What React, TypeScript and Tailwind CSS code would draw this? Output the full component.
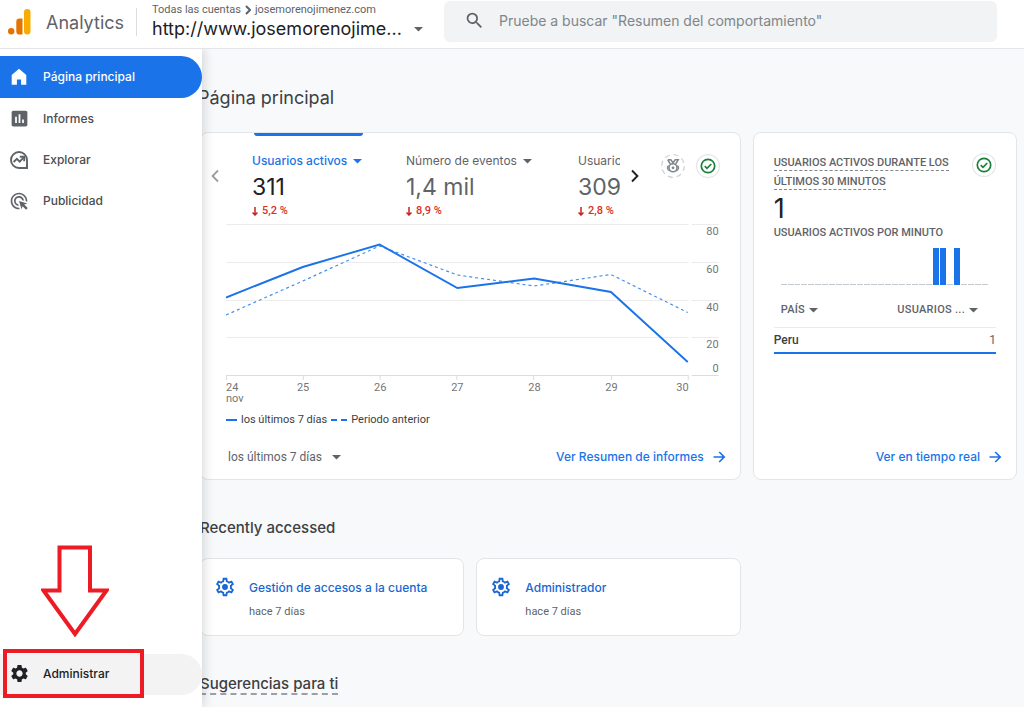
import { FormEvent } from "react";
import { MdAdsClick, MdInsertChart, MdSearch, MdSettings } from "react-icons/md";

const days = ["24", "25", "26", "27", "28", "29", "30"];

const metrics = [
  { label: "Usuarios activos", value: "311", change: "5,2 %", active: true },
  { label: "Número de eventos", value: "1,4 mil", change: "8,9 %", active: false },
  { label: "Usuarios nuevos", value: "309", change: "2,8 %", active: false },
];

const recent = [
  { title: "Gestión de accesos a la cuenta", when: "hace 7 días" },
  { title: "Administrador", when: "hace 7 días" },
];

function Logo() {
  return (
    <svg width="24" height="26" viewBox="0 0 24 26" aria-hidden>
      <rect x="16" y="0" width="6.5" height="25.5" rx="3.2" fill="#f9ab00" />
      <path d="M8.3 12.6a3.1 3.1 0 0 1 3.1-3.1h3.1v16h-3.1a3.1 3.1 0 0 1-3.1-3.1z" fill="#e37400" />
      <circle cx="3.2" cy="22.3" r="3.2" fill="#e37400" />
    </svg>
  );
}

function HomeIcon() {
  return (
    <svg width="18" height="18" viewBox="0 0 18 18" fill="currentColor" aria-hidden>
      <path d="M9 .8 16.3 7v9.8h-5.2v-5.2H6.9v5.2H1.7V7z" />
    </svg>
  );
}

function ExploreIcon() {
  return (
    <svg width="20" height="20" viewBox="0 0 20 20" fill="none" stroke="currentColor" strokeWidth="1.9" aria-hidden>
      <path d="M10 18a8 8 0 1 1 8-8v8z" />
      <path d="m4.6 12 3.3-3.2 2.8 2.8 3.8-4" />
      <path d="M10.8 6.8h4.4v4.4" />
      <path d="M18.6 13v5.6H13c3 0 5-2.6 5.6-5.6z" fill="currentColor" stroke="none" />
    </svg>
  );
}

function CheckBadge() {
  return (
    <svg width="24" height="24" viewBox="0 0 24 24" fill="none" aria-hidden>
      <circle cx="12" cy="12" r="11.4" fill="#fff" stroke="#e3e5e8" strokeWidth="1.2" />
      <circle cx="12" cy="12" r="6.7" stroke="#188038" strokeWidth="1.7" />
      <path d="m8.7 12.2 2.3 2.2 4.3-4.4" stroke="#188038" strokeWidth="1.6" />
    </svg>
  );
}

function MedalBadge() {
  return (
    <svg width="24" height="24" viewBox="0 0 24 24" fill="none" stroke="#80868b" aria-hidden>
      <circle cx="12" cy="12" r="11.3" stroke="#ced1d5" strokeWidth="1.2" strokeDasharray="5 3.9" />
      <path d="M6.8 5.8h3l2.2 3 2.2-3h3l-2.5 4.2M6.8 5.800 9.3 10" strokeWidth="1.5" />
      <circle cx="12" cy="13.8" r="4" strokeWidth="1.6" />
      <path d="M7.6 11.500c-1.800 1.400-1.600 4.200 1 5.400M16.400 11.500c1.800 1.400 1.600 4.200-1 5.400" strokeWidth="1.3" />
      <circle cx="12" cy="13.8" r="1.4" fill="#80868b" stroke="none" />
    </svg>
  );
}

function GearIcon() {
  return (
    <svg width="22" height="22" viewBox="0 0 24 24" fill="#1967d2" aria-hidden>
      <path
        fillRule="evenodd"
        d="M19.43 12.98c.04-.32.07-.64.07-.98s-.03-.66-.07-.98l2.11-1.65c.19-.15.24-.42.12-.64l-2-3.46c-.12-.22-.39-.3-.61-.22l-2.49 1c-.52-.4-1.08-.73-1.69-.98l-.38-2.65C14.46 2.18 14.25 2 14 2h-4c-.25 0-.46.18-.49.42l-.38 2.65c-.61.25-1.17.59-1.69.98l-2.49-1c-.23-.09-.49 0-.61.22l-2 3.46c-.13.22-.07.49.12.64l2.11 1.65c-.04.32-.07.65-.07.98s.03.66.07.98l-2.11 1.65c-.19.15-.24.42-.12.64l2 3.46c.12.22.39.3.61.22l2.49-1c.52.4 1.08.73 1.69.98l.38 2.65c.03.24.24.42.49.42h4c.25 0 .46-.18.49-.42l.38-2.65c.61-.25 1.17-.59 1.69-.98l2.49 1c.23.09.49 0 .61-.22l2-3.46c.12-.22.07-.49-.12-.64zm-1.98-1.71c.04.31.05.52.05.73s-.02.43-.05.73l-.14 1.13.89.7 1.08.84-.7 1.21-1.27-.51-1.04-.42-.9.68c-.43.32-.84.56-1.25.73l-1.06.43-.16 1.13-.2 1.35h-1.4l-.19-1.35-.16-1.13-1.06-.43c-.43-.18-.83-.41-1.23-.71l-.91-.7-1.06.43-1.27.51-.7-1.21 1.08-.84.89-.7-.14-1.13c-.03-.31-.05-.54-.05-.74s.02-.43.05-.73l.14-1.13-.89-.7-1.08-.84.7-1.21 1.27.51 1.04.42.9-.68c.43-.32.84-.56 1.25-.73l1.06-.43.16-1.13.2-1.35h1.39l.19 1.35.16 1.13 1.06.43c.43.18.83.41 1.23.71l.91.7 1.06-.43 1.27-.51.7 1.21-1.07.85-.89.7z"
      />
      <circle cx="12" cy="12" r="3.2" />
    </svg>
  );
}

function Chevron({ dir }: { dir: "left" | "right" }) {
  return (
    <svg width="8" height="14" viewBox="0 0 8 14" fill="none" stroke="currentColor" strokeWidth="1.9" aria-hidden>
      <path d={dir === "left" ? "M7 1.500 1.600 7 7 12.500" : "m1 1.500 5.400 5.500L1 12.500"} />
    </svg>
  );
}

function Caret() {
  return (
    <svg width="9" height="5" viewBox="0 0 9 5" fill="currentColor" className="shrink-0" aria-hidden>
      <path d="M0 0h9L4.500 4.600z" />
    </svg>
  );
}

function Header() {
  return (
    <header className="relative z-20 flex h-[49px] shrink-0 items-start border-b border-[#e3e5e8] bg-white">
      <a href="#inicio" className="flex h-11 w-[136px] shrink-0 items-center gap-3.5 pl-2">
        <Logo />
        <span className="text-[18px] text-[#5f6368]">Analytics</span>
      </a>
      <div className="mt-2 h-7 w-px shrink-0 bg-[#dadce0]" />
      <div className="w-[307px] shrink-0 pl-[15px] pt-[2px]">
        <div className="flex items-center gap-1 font-['Roboto',sans-serif] text-[11px] leading-4 text-[#5f6368]">
          <span>Todas las cuentas</span>
          <svg width="6" height="10" viewBox="0 0 6 10" fill="none" stroke="currentColor" strokeWidth="2" aria-hidden>
            <path d="m1 1 4 4-4 4" />
          </svg>
          <span>josemorenojimenez.com</span>
        </div>
        <button type="button" className="flex items-center gap-3 text-[18px] leading-[22px] text-[#202124]">
          <span>http://www.josemorenojime...</span>
          <span className="text-[#5f6368]"><Caret /></span>
        </button>
      </div>
      <form
        role="search"
        onSubmit={(e: FormEvent) => e.preventDefault()}
        className="mr-[27px] mt-px flex h-[41px] min-w-0 flex-1 items-center rounded-md bg-[#f1f3f4] pb-0.5 pl-5"
      >
        <MdSearch size={21} className="shrink-0 text-[#5f6368]" />
        <input
          type="search"
          aria-label="Buscar"
          placeholder={'Pruebe a buscar "Resumen del comportamiento"'}
          className="ml-3.5 min-w-0 flex-1 bg-transparent text-[14px] text-[#202124] outline-none placeholder:text-[#80868b]"
        />
      </form>
    </header>
  );
}

function Sidebar() {
  const items = [
    { label: "Página principal", icon: <HomeIcon />, active: true },
    { label: "Informes", icon: <MdInsertChart size={21} />, active: false },
    { label: "Explorar", icon: <ExploreIcon />, active: false },
    { label: "Publicidad", icon: <MdAdsClick size={20} />, active: false },
  ];
  return (
    <aside className="relative z-10 flex w-[202px] shrink-0 flex-col bg-white pt-[7px] shadow-[2px_0_10px_rgba(60,64,67,0.2)]">
      <nav className="flex flex-col">
        {items.map((item) => (
          <a
            key={item.label}
            href="#"
            aria-current={item.active ? "page" : undefined}
            className={
              item.active
                ? "flex h-[42px] items-center rounded-r-full bg-[#1a73e8] text-[12px] font-medium text-white"
                : "flex h-[41px] items-center rounded-r-full text-[12px] font-medium text-[#4a4d51]"
            }
          >
            <span className={item.active ? "flex w-[38px] justify-center" : "flex w-[38px] justify-center text-[#5f6368]"}>
              {item.icon}
            </span>
            <span className="pl-[5px]">{item.label}</span>
          </a>
        ))}
      </nav>
      <div className="mt-auto flex flex-col">
        <svg width="68" height="92" viewBox="0 0 68 92" fill="none" stroke="#ed1c24" strokeWidth="4" className="mb-[17px] ml-[41px]" aria-hidden>
          <path d="M18.5 2.500h30.500v43h16.500L34 89 2.500 45.500h16z" />
        </svg>
        <div className="relative mb-3 flex">
          <a href="#administrar" className="flex h-[41px] flex-1 items-center rounded-r-full bg-[#f3f3f3] pb-0.5 text-[12px] font-medium text-[#202124]">
            <span className="flex w-[38px] justify-center"><MdSettings size={21} /></span>
            <span className="pl-[5px]">Administrar</span>
          </a>
          {/* red highlight around the admin entry */}
          <div className="pointer-events-none absolute -bottom-[3px] -top-[5px] left-[3px] w-[141px] border-4 border-[#ed1c24]" />
        </div>
      </div>
    </aside>
  );
}

function TrendChart() {
  return (
    <div className="ml-[25px] mr-[21px] font-['Roboto',sans-serif] text-[11px] text-[#757575]">
      <div className="flex">
        <svg viewBox="0 0 494 158" className="h-[158px] min-w-0 flex-1" preserveAspectRatio="none" fill="none" aria-hidden>
          {[1, 39, 77, 114].map((y) => (
            <path key={y} d={`M0 ${y - 0.5}h464M467 ${y - 0.5}h27`} stroke="#ececec" />
          ))}
          <path d="M0 151.5h464M467 151.5h27" stroke="#dcdcdc" />
          {[0.5, 77.5, 154.5, 231.5, 308.5, 386.5, 463.5].map((x) => (
            <path key={x} d={`M${x} 152v4`} stroke="#dcdcdc" />
          ))}
          <path d="M0 91 77 57l77-35 78 29 77 11 77-11.500 77 38" stroke="#1a73e8" strokeOpacity=".8" strokeWidth="1.2" strokeDasharray="3 3" />
          <path d="m0 73.500 77-30.500 77-22.500 78 43.500 77-9.500 77 13.500 77 70" stroke="#1a73e8" strokeWidth="1.9" />
        </svg>
        <div className="-ml-4 flex h-[158px] w-4 shrink-0 flex-col items-end pt-px leading-[14px]">
          <span className="mb-6">80</span>
          <span className="mb-6">60</span>
          <span className="mb-[23px]">40</span>
          <span className="mb-[10px]">20</span>
          <span>0</span>
        </div>
      </div>
      {/* end labels sit inside the axis, the rest are centred on their tick */}
      <div className="mr-[30px] grid grid-cols-12 leading-[11px]">
        {days.map((d, i) => (
          <div
            key={d}
            className={i === 0 ? "col-span-1" : i === days.length - 1 ? "col-span-1 text-right" : "col-span-2 text-center"}
          >
            <div>{d}</div>
            {i === 0 && <div>nov</div>}
          </div>
        ))}
      </div>
      <div className="mt-[9px] flex items-center leading-[14px] text-[#3c4043]">
        <span className="mr-1 h-[2px] w-[11px] bg-[#1a73e8]" />
        <span>los últimos 7 días</span>
        <span className="ml-1 mr-1 h-[2px] w-1.5 bg-[#1a73e8]" />
        <span className="mr-1 h-[2px] w-1.5 bg-[#1a73e8]" />
        <span>Periodo anterior</span>
      </div>
    </div>
  );
}

function CardLink({ children }: { children: string }) {
  return (
    <a href="#informe" className="flex items-center gap-2 text-[12px] font-medium leading-4 text-[#1a73e8]">
      {children}
      <svg width="14" height="14" viewBox="0 0 14 14" fill="none" stroke="currentColor" strokeWidth="1.7" aria-hidden>
        <path d="M1.500 7h10.500M7.200 2l5 5-5 5" />
      </svg>
    </a>
  );
}

function OverviewCard() {
  return (
    <section className="col-span-2 flex h-[348px] flex-col rounded-lg border border-[#e3e5e8] bg-white">
      <div className="flex h-[91px] shrink-0">
        <button type="button" aria-label="Anterior" className="mt-9 flex h-[14px] w-[51px] pl-[10px] text-[#9aa0a6]">
          <Chevron dir="left" />
        </button>
        <div className="flex w-[368px] gap-0 overflow-hidden">
          {metrics.map((m) => (
            <div key={m.label} className="w-[154px] shrink-0 last:ml-[18px]">
              <div className={m.active ? "ml-0.5 h-[3px] w-[109px] rounded-b-sm bg-[#1a73e8]" : "h-[3px]"} />
              <button
                type="button"
                className={
                  m.active
                    ? "mt-4 flex items-center gap-1.5 whitespace-nowrap text-[12px] font-medium leading-[18px] text-[#1a73e8]"
                    : "mt-4 flex items-center gap-1.5 whitespace-nowrap text-[12px] leading-[18px] text-[#5f6368]"
                }
              >
                {m.label}
                <Caret />
              </button>
              <div className={m.active ? "mt-[3px] text-[23px] leading-7 text-[#202124]" : "mt-[3px] text-[23px] leading-7 text-[#5f6368]"}>
                {m.value}
              </div>
              <div className="mt-1 flex items-center gap-1 font-['Roboto',sans-serif] text-[11px] font-medium leading-3 text-[#d93025]">
                <svg width="6" height="9" viewBox="0 0 6 9" fill="none" stroke="#c5221f" strokeWidth="1.5" aria-hidden>
                  <path d="M3 0v8M.5 5.500 3 8l2.500-2.500" />
                </svg>
                {m.change}
              </div>
            </div>
          ))}
        </div>
        <button type="button" aria-label="Siguiente" className="ml-[11px] mt-9 flex h-[14px] text-[#202124]">
          <Chevron dir="right" />
        </button>
        <div className="ml-auto mr-5 mt-[21px] flex gap-[11px]">
          <MedalBadge />
          <CheckBadge />
        </div>
      </div>
      <TrendChart />
      <div className="mb-[14px] ml-[27px] mr-[14px] mt-auto flex items-center justify-between">
        <button type="button" className="flex items-center gap-2.5 font-['Roboto',sans-serif] text-[12px] leading-4 text-[#5f6368]">
          los últimos 7 días
          <Caret />
        </button>
        <CardLink>Ver Resumen de informes</CardLink>
      </div>
    </section>
  );
}

function RealtimeCard() {
  // last 30 minutes, one slot each
  const bars = Array.from({ length: 30 }, (_, i) => [22, 23, 25].includes(i));
  return (
    <section className="flex h-[348px] flex-col rounded-lg border border-[#e3e5e8] bg-white pl-5 font-['Roboto',sans-serif]">
      <div className="flex items-start justify-between pr-5 pt-5">
        <h2 className="w-[182px] text-[11px] font-medium leading-[19px] text-[#5f6368]">
          <span className="border-b border-dashed border-[#80868b] pb-px">USUARIOS ACTIVOS DURANTE LOS ÚLTIMOS 30 MINUTOS</span>
        </h2>
        <CheckBadge />
      </div>
      <div className="mt-[2px] font-['Inter',sans-serif] text-[27px] leading-8 text-[#202124]">1</div>
      <h3 className="text-[11px] font-medium leading-4 text-[#5f6368]">USUARIOS ACTIVOS POR MINUTO</h3>
      <div className="ml-[7px] mr-[28px] mt-[7px] flex h-[37px] items-end gap-px" role="img" aria-label="Usuarios activos por minuto">
        {bars.map((on, i) => (
          <span key={i} className={on ? "h-[37px] flex-1 bg-[#1a73e8]" : "h-px flex-1 bg-[#c4c9ce]"} />
        ))}
      </div>
      <table className="mr-5 mt-[9px] border-collapse text-[12px] text-[#5f6368]">
        <thead>
          <tr className="h-[33px] border-b border-[#e8eaed] text-[11px] tracking-wide">
            <th className="pl-[7px] text-left font-medium">
              <button type="button" className="flex items-center gap-1">PAÍS <Caret /></button>
            </th>
            <th className="pr-[18px] font-medium">
              <button type="button" className="ml-auto flex items-center gap-1">USUARIOS ... <Caret /></button>
            </th>
          </tr>
        </thead>
        <tbody>
          <tr className="h-[26px] border-b-2 border-[#1a73e8]">
            <td className="font-medium text-[#3c4043]">Peru</td>
            <td className="text-right">1</td>
          </tr>
        </tbody>
      </table>
      <div className="mb-[14px] mr-[14px] mt-auto flex justify-end font-['Inter',sans-serif]">
        <CardLink>Ver en tiempo real</CardLink>
      </div>
    </section>
  );
}

export default function App() {
  return (
    <div className="flex h-screen flex-col overflow-hidden bg-[#f8f9fa] font-['Inter',sans-serif]">
      <Header />
      <div className="flex min-h-0 flex-1">
        <Sidebar />
        {/* the expanded sidebar covers the first pixels of the content */}
        <main className="-ml-0.5 min-w-0 flex-1 overflow-hidden pr-[7px]">
          <h1 className="-ml-0.5 mt-9 text-[18px] leading-[26px] text-[#3c4043]">Página principal</h1>
          <div className="mt-[21px] grid grid-cols-3 gap-3">
            <OverviewCard />
            <RealtimeCard />
          </div>
          <h2 className="mt-9 text-[15px] font-medium leading-6 text-[#3c4043]">Recently accessed</h2>
          <div className="mt-[18px] grid grid-cols-3 gap-3">
            {recent.map((r) => (
              <a key={r.title} href="#reciente" className="flex h-[78px] gap-[13px] rounded-lg border border-[#e3e5e8] bg-white pl-[13px] pt-[17px]">
                <GearIcon />
                <span>
                  <span className="block text-[12px] font-medium leading-6 text-[#1967d2]">{r.title}</span>
                  <span className="block font-['Roboto',sans-serif] text-[11px] leading-6 text-[#5f6368]">{r.when}</span>
                </span>
              </a>
            ))}
          </div>
          <h2 className="mt-9 text-[15px] font-medium leading-6 text-[#3c4043]">
            <span className="border-b-2 border-dashed border-[#9aa0a6]">Sugerencias para ti</span>
          </h2>
        </main>
      </div>
    </div>
  );
}
